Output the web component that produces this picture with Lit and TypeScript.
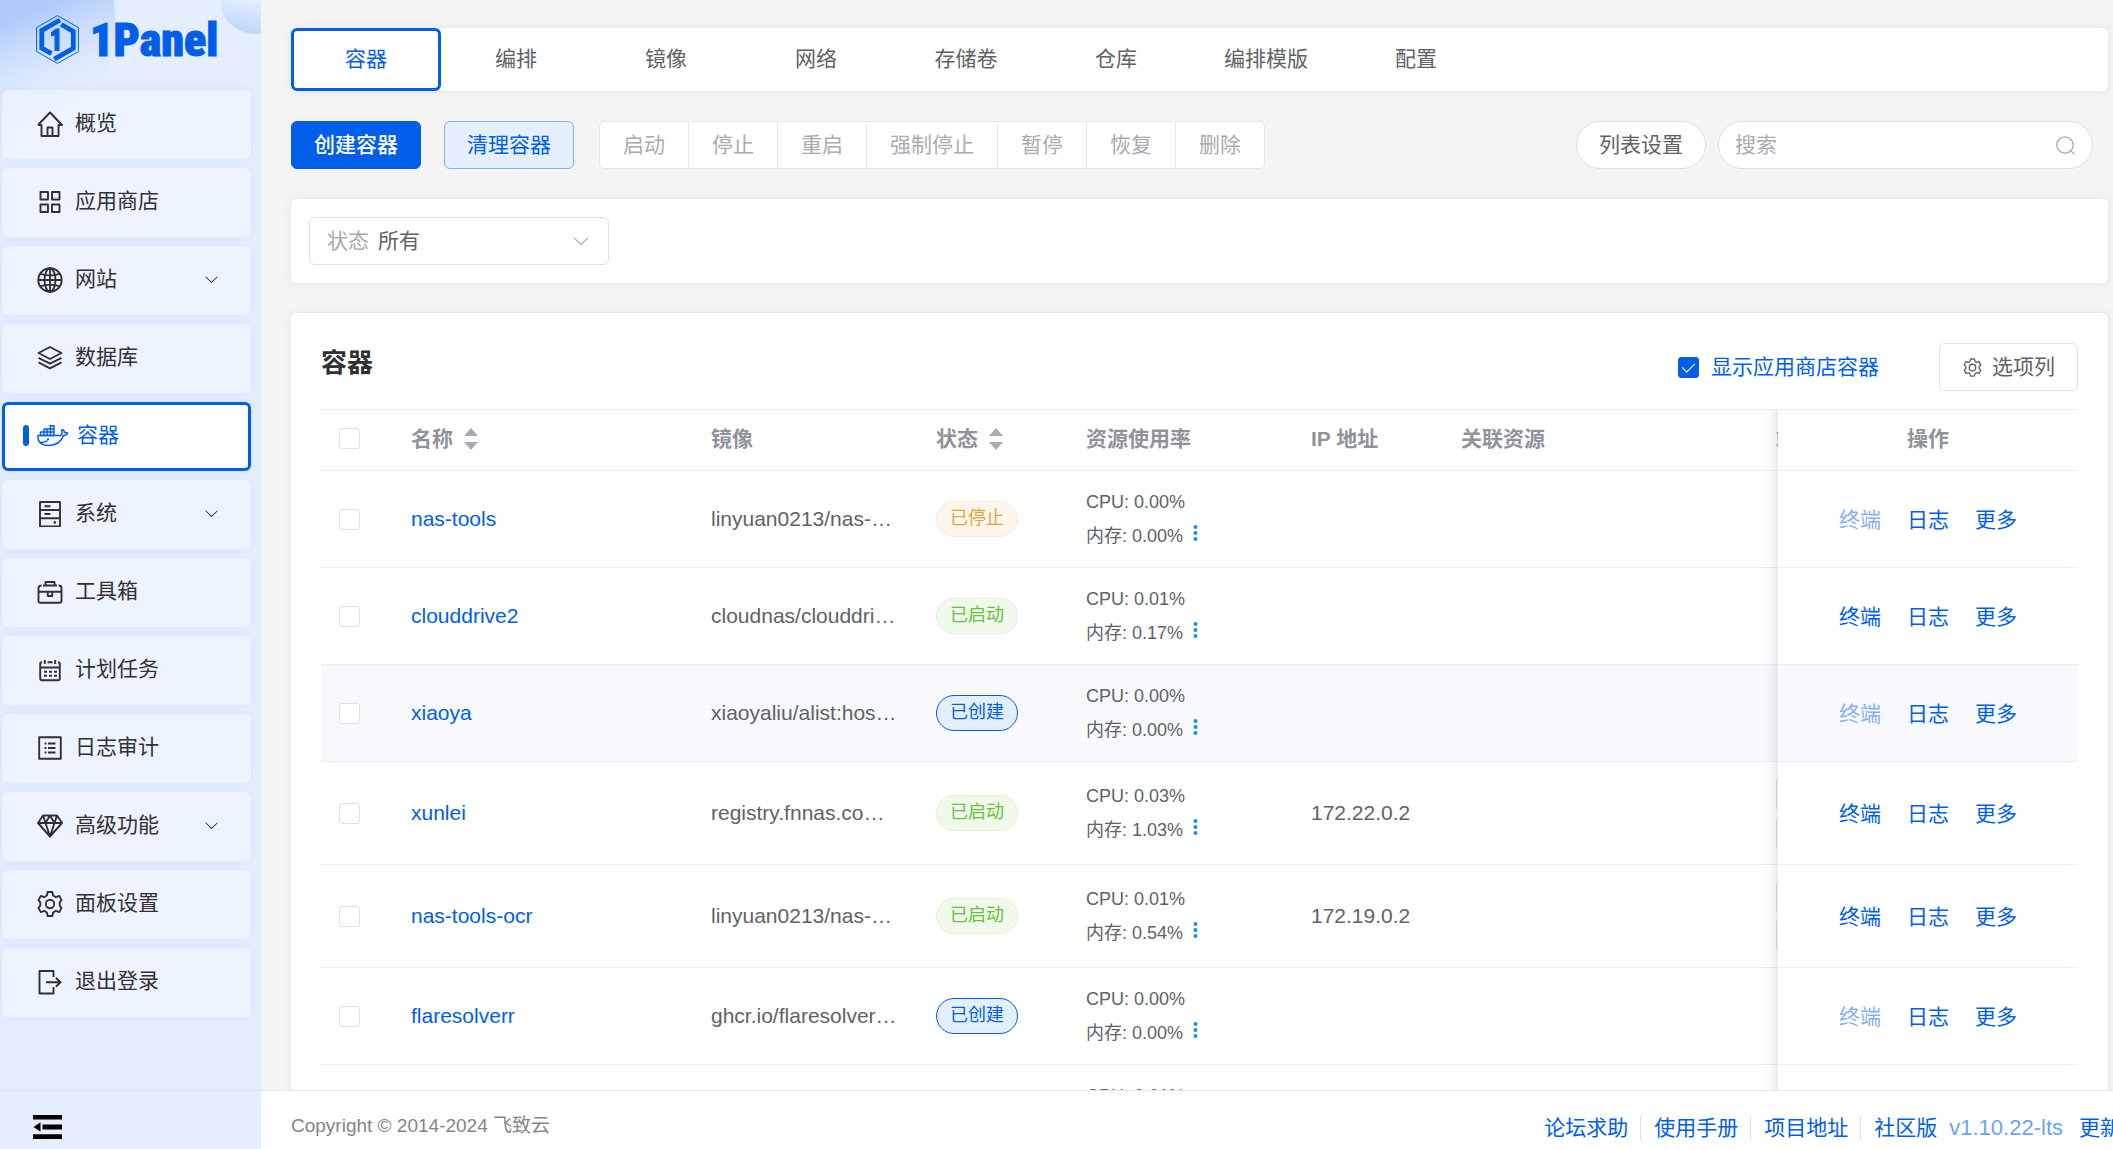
import { LitElement, html, css, svg, nothing, TemplateResult } from "lit";
import { customElement, property, state } from "lit/decorators.js";
import { classMap } from "lit/directives/class-map.js";

const GEAR =
  "M600.704 64a32 32 0 0 1 30.464 22.208l35.2 109.376c14.784 7.232 28.928 15.36 42.432 24.512l112.384-24.192a32 32 0 0 1 34.432 15.36L944.32 364.8a32 32 0 0 1-4.032 37.504l-77.12 85.12a357.12 357.12 0 0 1 0 49.024l77.12 85.248a32 32 0 0 1 4.032 37.504l-88.704 153.6a32 32 0 0 1-34.432 15.296L708.8 803.904c-13.44 9.088-27.648 17.28-42.368 24.512l-35.264 109.376A32 32 0 0 1 600.704 960H423.296a32 32 0 0 1-30.464-22.208L357.696 828.48a351.616 351.616 0 0 1-42.56-24.64l-112.32 24.256a32 32 0 0 1-34.432-15.36L79.68 659.2a32 32 0 0 1 4.032-37.504l77.12-85.248a357.12 357.12 0 0 1 0-48.896l-77.12-85.248A32 32 0 0 1 79.68 364.8l88.704-153.6a32 32 0 0 1 34.432-15.296l112.32 24.256c13.568-9.152 27.776-17.408 42.56-24.64l35.2-109.312A32 32 0 0 1 423.232 64H600.64zm-23.424 64H446.72l-36.352 113.088-24.512 11.968a294.113 294.113 0 0 0-34.816 20.096l-22.656 15.36-116.224-25.088-65.28 113.152 79.68 88.192-1.92 27.136a293.12 293.12 0 0 0 0 40.192l1.92 27.136-79.808 88.192 65.344 113.152 116.224-25.024 22.656 15.296a294.113 294.113 0 0 0 34.816 20.096l24.512 11.968L446.72 896h130.688l36.48-113.152 24.448-11.904a288.282 288.282 0 0 0 34.752-20.096l22.592-15.296 116.288 25.024 65.28-113.152-79.744-88.192 1.92-27.136a293.12 293.12 0 0 0 0-40.256l-1.92-27.136 79.808-88.128-65.344-113.152-116.288 24.96-22.592-15.232a287.616 287.616 0 0 0-34.752-20.096l-24.448-11.904L577.344 128zM512 320a192 192 0 1 1 0 384 192 192 0 0 1 0-384zm0 64a128 128 0 1 0 0 256 128 128 0 0 0 0-256z";

const CHEVRON =
  "M831.872 340.864 512 652.672 192.128 340.864a30.592 30.592 0 0 0-42.752 0 29.12 29.12 0 0 0 0 41.6L489.664 714.24a32 32 0 0 0 44.672 0l340.288-331.712a29.12 29.12 0 0 0 0-41.728 30.592 30.592 0 0 0-42.752 0z";

const ICONS: Record<string, TemplateResult> = {
  home: svg`<path d="M1 14 13 1.500l12 12.500H21.500M4.500 13.500V25h17V13.500M1 14h3.500M10.500 25v-8.500h5V25"/>`,
  apps: svg`<path d="M3.500 3h7.500v7.500H3.500zM15 3h7.500v7.500H15zM3.500 15.500H11V23H3.500zM15 15.500h7.500V23H15z"/>`,
  globe: svg`<circle cx="13" cy="13" r="11.700"/><ellipse cx="13" cy="13" rx="5.500" ry="11.700"/><path d="M13 1.300v23.400M1.300 13h23.400M3.500 6.800q9.500 3.200 19 0M3.500 19.200q9.500-3.200 19 0"/>`,
  layers: svg`<path d="m13 2 11.500 6L13 14 1.500 8zM1.500 12.800 13 18.600l11.500-5.800M1.500 17.400 13 23.400l11.500-6"/>`,
  docker: svg`<g stroke-width="1.500"><path d="M1 10.500h22.500c1.300-.400 1.800-1.300 1.500-2.500-.600-1.300-.500-2.400.300-3.500 1.500.700 2.200 1.900 2.200 3 1.200-.200 2.400 0 3.300.600-.900 1.700-2.400 2.400-4.300 2.500C24.300 17 18.800 20.500 11.500 20.500 4.500 20.500.300 17 1 10.500z"/><path d="M3.500 7h13.500v3.500H3.500zM7 4h10v3M12.500 .700H17V4M7 4v6.500M10 4v6.500M13.500 .700v9.800"/><path d="M3 17.300c3 .3 5.600-.3 7.500-1.600"/></g><circle cx="11" cy="14.300" r="1.100" fill="currentColor" stroke="none"/>`,
  server: svg`<path d="M3 1h20v24.500H3zM3 9h20M3 17.200h20M7.500 5.200h6M7.500 13h6"/><circle cx="17.800" cy="21.400" r="1.300" fill="currentColor" stroke="none"/>`,
  toolbox: svg`<path d="M1.500 12.800h23M8.500 6V3h9v4M4.500 6.500Q1.500 6.500 1.500 9v13q0 1.800 1.800 1.800h19.400q1.800 0 1.800-1.800V9q0-2.500-3-2.500M6 6.500h14M10.800 13v4h4.400v-4"/>`,
  calendar: svg`<path d="M5 5.200q-1.800 0-1.800 1.800v14.500q0 1.800 1.800 1.800h16q1.800 0 1.800-1.800V7q0-1.800-1.800-1.800M3.200 10.500h19.600M7.800 3v4M18.200 3v4M10.500 5.200h5"/><path stroke-dasharray="3 2" d="M7 14.700h13M7 18.700h13"/>`,
  list: svg`<path d="M2.200 2.200h21.600v21.600H2.200zM11 8.500h7.500M11 13h7.500M11 17.500h7.500M7.500 8.500h2M7.500 13h2M7.500 17.500h2"/>`,
  diamond: svg`<path d="M6 2.500h14l5 7.500-12 13.500L1 10zM1 10h24M6 2.500l2.500 7.500L13 23.500 17.500 10 20 2.500M8.500 10 13 2.500l4.500 7.500"/>`,
  cog: svg`<path d="M10.600 1h4.800l.7 3.500 2.800 1.700 3.300-1.300 2.300 4-1.800 2.600v3l1.800 2.600-2.300 4-3.300-1.300-2.800 1.700-.7 3.500h-4.800l-.7-3.500-2.800-1.700-3.300 1.300-2.300-4 1.800-2.600v-3L1.500 8.900l2.300-4 3.300 1.300 2.800-1.700z"/><circle cx="13" cy="13" r="4.200"/>`,
  logout: svg`<path d="M16.500 8V2H2.500v22.500h14V18M9 13.200h14.500M18.800 8.700l4.700 4.500-4.700 4.500"/>`,
};

interface MenuEntry {
  icon: string;
  label: string;
  expandable?: boolean;
}

const MENU: MenuEntry[] = [
  { icon: "home", label: "概览" },
  { icon: "apps", label: "应用商店" },
  { icon: "globe", label: "网站", expandable: true },
  { icon: "layers", label: "数据库" },
  { icon: "docker", label: "容器" },
  { icon: "server", label: "系统", expandable: true },
  { icon: "toolbox", label: "工具箱" },
  { icon: "calendar", label: "计划任务" },
  { icon: "list", label: "日志审计" },
  { icon: "diamond", label: "高级功能", expandable: true },
  { icon: "cog", label: "面板设置" },
  { icon: "logout", label: "退出登录" },
];

type Status = "stopped" | "running" | "created";

interface ContainerRow {
  cpu: string;
  name?: string;
  image?: string;
  status?: Status;
  memory?: string;
  ip?: string;
  ports?: number;
  hovered?: boolean;
}

const STATUS_LABEL: Record<Status, string> = {
  stopped: "已停止",
  running: "已启动",
  created: "已创建",
};

const ROWS: ContainerRow[] = [
  { name: "nas-tools", image: "linyuan0213/nas-…", status: "stopped", cpu: "0.00%", memory: "0.00%" },
  { name: "clouddrive2", image: "cloudnas/clouddri…", status: "running", cpu: "0.01%", memory: "0.17%" },
  { name: "xiaoya", image: "xiaoyaliu/alist:hos…", status: "created", cpu: "0.00%", memory: "0.00%", hovered: true },
  { name: "xunlei", image: "registry.fnnas.co…", status: "running", cpu: "0.03%", memory: "1.03%", ip: "172.22.0.2", ports: 2 },
  { name: "nas-tools-ocr", image: "linyuan0213/nas-…", status: "running", cpu: "0.01%", memory: "0.54%", ip: "172.19.0.2", ports: 2 },
  { name: "flaresolverr", image: "ghcr.io/flaresolver…", status: "created", cpu: "0.00%", memory: "0.00%" },
  { cpu: "0.01%" },
];

const base = css`
  * {
    box-sizing: border-box;
  }
  a {
    color: inherit;
    text-decoration: none;
  }
  button,
  input,
  select {
    font: inherit;
    margin: 0;
  }
  svg {
    display: block;
    flex: none;
  }
  .check {
    appearance: none;
    display: grid;
    place-items: center;
    flex: none;
    width: 21px;
    height: 21px;
    border: 1px solid #dcdfe6;
    border-radius: 3px;
    background: #fff;
  }
  .check:checked {
    border-color: #005eeb;
    background: #005eeb;
  }
  .check:checked::before {
    content: "";
    width: 6px;
    height: 11px;
    margin-bottom: 3px;
    border: solid #fff;
    border-width: 0 1px 1px 0;
    rotate: 45deg;
  }
`;

@customElement("side-bar")
export class SideBar extends LitElement {
  static styles = [
    base,
    css`
      :host {
        display: flex;
        flex-direction: column;
        position: relative;
        overflow: hidden;
        background: #e5eeff;
      }
      .backdrop {
        position: absolute;
        inset: 0 0 auto 0;
        width: 100%;
      }
      .brand {
        position: relative;
        display: flex;
        align-items: center;
        gap: 11px;
        height: 90px;
        padding: 0 0 11px 36px;
        color: #005eeb;
      }
      .name {
        font: 900 46px/50px "Liberation Sans Narrow", "Roboto Condensed", "Open Sans Condensed", Roboto, sans-serif;
        -webkit-text-stroke: 1px #005eeb;
      }
      nav {
        position: relative;
        display: flex;
        flex-direction: column;
        gap: 9px;
        padding: 0 10px 0 2px;
      }
      .item {
        display: flex;
        align-items: center;
        gap: 12px;
        height: 69px;
        padding: 0 31px 3px 35px;
        border-radius: 6px;
        background: rgba(255, 255, 255, 0.32);
        box-shadow: 0 0 9px rgba(0, 110, 210, 0.08);
        color: #303133;
      }
      .item span {
        flex: 1;
      }
      .item .icon {
        margin-top: 2px;
      }
      .active {
        gap: 9px;
        padding: 0 28px 3px 18px;
        border: 3px solid #005eeb;
        background: #fff;
        color: #005eeb;
      }
      .active::before {
        content: "";
        width: 6px;
        height: 21px;
        border-radius: 3px;
        background: #005eeb;
      }
      .active .icon {
        margin-left: -1px;
      }
    `,
  ];

  private renderItem(entry: MenuEntry) {
    const active = entry.icon === "docker";
    const width = active ? 31 : 26;
    const height = active ? 22 : 26;
    return html`<a class=${classMap({ item: true, active })} href="#" aria-current=${active ? "page" : "false"}>
      <svg class="icon" width=${width} height=${height} viewBox="0 0 ${width} ${height}" fill="none" stroke="currentColor" stroke-width="1.9" stroke-linejoin="round">
        ${ICONS[entry.icon]}
      </svg>
      <span>${entry.label}</span>
      ${entry.expandable
        ? html`<svg width="17" height="17" viewBox="0 0 1024 1024" fill="#303133"><path d=${CHEVRON} /></svg>`
        : nothing}
    </a>`;
  }

  render() {
    return html`
      <svg class="backdrop" viewBox="0 0 261 180" aria-hidden="true">
        <defs>
          <linearGradient id="big" gradientUnits="userSpaceOnUse" x1="0" y1="25" x2="40" y2="125">
            <stop offset="0" stop-color="#aecbf9" />
            <stop offset="1" stop-color="#e5eeff" stop-opacity="0" />
          </linearGradient>
          <linearGradient id="small" gradientUnits="userSpaceOnUse" x1="261" y1="0" x2="255" y2="34">
            <stop offset="0" stop-color="#e5effe" />
            <stop offset="1" stop-color="#bfd6fa" />
          </linearGradient>
        </defs>
        <circle cx="-65" cy="20" r="180" fill="url(#big)" />
        <circle cx="255" cy="-1" r="35" fill="url(#small)" />
      </svg>
      <div class="brand">
        <svg width="43" height="49" viewBox="0 0 43 49" fill="none">
          <path stroke="currentColor" stroke-width="1" d="M21.500 .600 42.400 12.500v24L21.500 48.400.600 36.500v-24z" />
          <path stroke="currentColor" stroke-width="4.800" d="M24 5 5.800 15.300V33l9.700 5.600M25.300 9.500l12 6.800v17L18.300 44.200" />
          <path fill="currentColor" d="M23.500 13.500V36h-5V20.500L15 21.500v-4.300l5-3.700z" />
        </svg>
        <span class="name">1Panel</span>
      </div>
      <nav aria-label="主菜单">${MENU.map((entry) => this.renderItem(entry))}</nav>
    `;
  }
}

@customElement("container-table")
export class ContainerTable extends LitElement {
  @property({ attribute: false }) rows: ContainerRow[] = [];

  static styles = [
    base,
    css`
      :host {
        display: block;
        overflow: hidden;
        border-top: 1px solid #ebeef5;
      }
      table {
        width: calc(100% + 280px);
        table-layout: fixed;
        border-collapse: separate;
        border-spacing: 0;
      }
      th,
      td {
        padding: 0 18px;
        border-bottom: 1px solid #ebeef5;
        background: #fff;
        text-align: left;
        white-space: nowrap;
      }
      th {
        height: 61px;
        padding-bottom: 3px;
        color: #909399;
        font-weight: bold;
      }
      td {
        height: 97px;
        color: #606266;
      }
      .tall td {
        height: 103px;
      }
      .hovered td {
        background: #f7f9fc;
      }
      .w-check {
        width: 72px;
      }
      .w-name,
      .w-ports,
      .w-ops {
        width: 300px;
      }
      .w-image,
      .w-usage {
        width: 225px;
      }
      .w-status,
      .w-ip {
        width: 150px;
      }
      .sortable {
        display: flex;
        align-items: center;
        gap: 11px;
      }
      .name {
        color: #005eeb;
      }
      .tag {
        display: inline-block;
        height: 36px;
        padding: 0 13px;
        border: 1px solid;
        border-radius: 18px;
        font-size: 18px;
        line-height: 33px;
        vertical-align: middle;
      }
      .stopped {
        border-color: #faecd8;
        background: #fdf6ec;
        color: #e6a23c;
      }
      .running {
        border-color: #e1f3d8;
        background: #f0f9eb;
        color: #67c23a;
      }
      .created {
        border-color: #005eeb;
        background: #e5eefd;
        color: #005eeb;
      }
      .usage {
        font-size: 18px;
        line-height: 34px;
      }
      .blank {
        height: 34px;
      }
      .memory {
        display: flex;
        gap: 10px;
      }
      .more {
        padding: 0;
        border: 0;
        background: none;
        color: #1296db;
      }
      .more svg {
        margin-bottom: 6px;
      }
      .port {
        display: block;
        width: 200px;
        height: 35px;
        border: 1px solid #dcdfe6;
        border-radius: 5px;
        background: #fff;
      }
      .port + .port {
        margin-top: 4px;
      }
      .fixed {
        position: sticky;
        right: 0;
        text-align: center;
      }
      .fixed::before {
        content: "";
        position: absolute;
        inset: 0 auto -1px -15px;
        width: 15px;
        box-shadow: inset -15px 0 15px -15px rgba(0, 0, 0, 0.16);
      }
      .ops {
        display: flex;
        justify-content: center;
        gap: 26px;
        padding-top: 2px;
      }
      .op {
        padding: 0;
        border: 0;
        background: none;
        color: #005eeb;
      }
      .op:disabled {
        color: #85b0f8;
      }
    `,
  ];

  private renderSort() {
    return html`<svg width="14" height="24" viewBox="0 0 14 24" fill="#a8abb2" aria-hidden="true">
      <path d="M7 1l7 8H0zM7 23l7-8H0z" />
    </svg>`;
  }

  private renderMemory(memory?: string) {
    if (!memory) return html`<div class="blank"></div>`;
    return html`<div class="usage memory">
      内存: ${memory}
      <button class="more" aria-label="资源详情">
        <svg width="5" height="16" viewBox="0 0 5 16" fill="currentColor">
          <circle cx="2.500" cy="2" r="2" /><circle cx="2.500" cy="8" r="2" /><circle cx="2.500" cy="14" r="2" />
        </svg>
      </button>
    </div>`;
  }

  private renderRow(row: ContainerRow) {
    return html`<tr class=${classMap({ tall: !!row.ports, hovered: !!row.hovered })}>
      <td>${row.name ? html`<input class="check" type="checkbox" aria-label="选择 ${row.name}" />` : nothing}</td>
      <td>${row.name ? html`<a class="name" href="#">${row.name}</a>` : nothing}</td>
      <td>${row.image ?? nothing}</td>
      <td>${row.status ? html`<span class="tag ${row.status}">${STATUS_LABEL[row.status]}</span>` : nothing}</td>
      <td>
        <div class="usage">CPU: ${row.cpu}</div>
        ${this.renderMemory(row.memory)}
      </td>
      <td>${row.ip ?? nothing}</td>
      <td></td>
      <td>${Array.from({ length: row.ports ?? 0 }, () => html`<button class="port" aria-label="端口"></button>`)}</td>
      <td class="fixed">
        ${row.status
          ? html`<div class="ops">
              <button class="op" ?disabled=${row.status !== "running"}>终端</button>
              <button class="op">日志</button>
              <button class="op">更多</button>
            </div>`
          : nothing}
      </td>
    </tr>`;
  }

  render() {
    return html`<table>
      <thead>
        <tr>
          <th class="w-check"><input class="check" type="checkbox" aria-label="全选" /></th>
          <th class="w-name"><div class="sortable">名称 ${this.renderSort()}</div></th>
          <th class="w-image">镜像</th>
          <th class="w-status"><div class="sortable">状态 ${this.renderSort()}</div></th>
          <th class="w-usage">资源使用率</th>
          <th class="w-ip">IP 地址</th>
          <th>关联资源</th>
          <th class="w-ports">端口</th>
          <th class="w-ops fixed">操作</th>
        </tr>
      </thead>
      <tbody>
        ${this.rows.map((row) => this.renderRow(row))}
      </tbody>
    </table>`;
  }
}

@customElement("app-root")
export class AppRoot extends LitElement {
  @state() private tab = "容器";

  static styles = [
    base,
    css`
      :host {
        display: grid;
        grid-template: minmax(0, 1fr) 59px / 261px minmax(0, 1fr);
        height: 100vh;
        overflow: hidden;
        background: #f4f4f4;
        color: #606266;
        font: 21px/30px "Liberation Sans", "Noto Sans CJK SC", sans-serif;
      }
      main {
        display: flex;
        flex-direction: column;
        gap: 30px;
        overflow: hidden;
        padding: 28px 5px 0 30px;
      }
      .card {
        flex: none;
        border-radius: 6px;
        background: #fff;
        box-shadow: 0 0 9px rgba(0, 94, 235, 0.1);
      }
      .tabs {
        display: flex;
      }
      .tab {
        width: 150px;
        height: 63px;
        padding: 0 0 1px;
        border: 3px solid transparent;
        border-radius: 6px;
        background: none;
        color: #606266;
      }
      .tab.selected {
        border-color: #005eeb;
        background: #fff;
        color: #005eeb;
      }
      .toolbar {
        display: flex;
        flex: none;
        align-items: center;
        gap: 23px;
        padding-right: 15px;
      }
      .btn {
        height: 48px;
        padding: 0 22px;
        border: 1px solid #dcdfe6;
        border-radius: 6px;
        background: #fff;
        color: #606266;
        white-space: nowrap;
      }
      .primary {
        border-color: #005eeb;
        background: #005eeb;
        color: #fff;
        font-weight: 500;
      }
      .plain {
        border-color: #80aff5;
        background: #e5effd;
        color: #005eeb;
      }
      .group {
        display: flex;
        margin-left: 2px;
      }
      .group .btn {
        padding: 0 23px;
        border-color: #e4e7ed;
        border-radius: 0;
        color: #a8abb2;
      }
      .group .btn + .btn {
        margin-left: -1px;
      }
      .group .btn:first-child {
        border-radius: 6px 0 0 6px;
      }
      .group .btn:last-child {
        border-radius: 0 6px 6px 0;
      }
      .right {
        display: flex;
        gap: 12px;
        margin-left: auto;
      }
      .right .btn {
        border-radius: 24px;
      }
      .search {
        display: flex;
        align-items: center;
        width: 375px;
        height: 48px;
        padding: 0 17px 0 16px;
        border: 1px solid #dcdfe6;
        border-radius: 24px;
        background: #fff;
        color: #a8abb2;
      }
      .search input {
        flex: 1;
        min-width: 0;
        padding: 0;
        border: 0;
        outline: 0;
        background: none;
      }
      .search input::placeholder {
        color: #a8abb2;
      }
      .filter {
        padding: 18px;
      }
      .select {
        display: flex;
        align-items: center;
        gap: 9px;
        width: 300px;
        height: 48px;
        padding: 0 17px 1px;
        border: 1px solid #dcdfe6;
        border-radius: 6px;
        color: #a8abb2;
      }
      .select select {
        flex: 1;
        appearance: none;
        padding: 0;
        border: 0;
        outline: 0;
        background: none;
        color: #606266;
      }
      .panel {
        padding: 30px;
      }
      .head {
        display: flex;
        align-items: center;
        height: 66px;
        padding-bottom: 18px;
      }
      h2 {
        flex: 1;
        margin: 0;
        padding-bottom: 9px;
        color: #303133;
        font-size: 26px;
        line-height: 36px;
      }
      .toggle {
        display: flex;
        align-items: center;
        gap: 12px;
        margin-right: 60px;
        color: #005eeb;
      }
      .columns {
        display: flex;
        align-items: center;
        gap: 9px;
      }
      .corner {
        padding: 24px 33px;
        border-top: 1px solid #dde3f0;
        background: #e5eeff;
      }
      .collapse {
        display: block;
        padding: 0;
        border: 0;
        background: none;
        color: #000;
      }
      footer {
        display: flex;
        align-items: center;
        justify-content: space-between;
        overflow: hidden;
        padding-left: 30px;
        border-top: 1px solid #e4e7ed;
        background: #fff;
        white-space: nowrap;
      }
      .copyright {
        padding-top: 12px;
        color: #858585;
        font-size: 19px;
      }
      .links {
        display: flex;
        align-items: center;
        margin-right: -8px;
        padding-top: 16px;
        color: #005eeb;
      }
      .links .sep {
        margin-right: 13px;
        padding-right: 12px;
        border-right: 1px solid #dcdfe6;
        line-height: 24px;
      }
      .version {
        margin: 0 16px 0 12px;
        color: #6ea2f5;
        font-size: 22px;
      }
    `,
  ];

  private tabs = ["容器", "编排", "镜像", "网络", "存储卷", "仓库", "编排模版", "配置"];
  private actions = ["启动", "停止", "重启", "强制停止", "暂停", "恢复", "删除"];

  render() {
    return html`
      <side-bar></side-bar>
      <main>
        <div class="card tabs">
          ${this.tabs.map(
            (label) => html`<button class=${classMap({ tab: true, selected: label === this.tab })} @click=${() => (this.tab = label)}>${label}</button>`
          )}
        </div>
        <div class="toolbar">
          <button class="btn primary">创建容器</button>
          <button class="btn plain">清理容器</button>
          <div class="group">${this.actions.map((label) => html`<button class="btn" disabled>${label}</button>`)}</div>
          <div class="right">
            <button class="btn">列表设置</button>
            <div class="search">
              <input type="text" placeholder="搜索" aria-label="搜索" />
              <svg width="19" height="19" viewBox="0 0 19 19" fill="none" stroke="currentColor" stroke-width="1.3">
                <circle cx="9" cy="9" r="8.200" />
                <path d="m15 15 3.300 3.300" />
              </svg>
            </div>
          </div>
        </div>
        <div class="card filter">
          <div class="select">
            <label for="status">状态</label>
            <select id="status">
              <option>所有</option>
            </select>
            <svg width="20" height="20" viewBox="0 0 1024 1024" fill="currentColor"><path d=${CHEVRON} /></svg>
          </div>
        </div>
        <section class="card panel">
          <div class="head">
            <h2>容器</h2>
            <label class="toggle"><input class="check" type="checkbox" checked />显示应用商店容器</label>
            <button class="btn columns">
              <svg width="21" height="21" viewBox="0 0 1024 1024" fill="currentColor"><path d=${GEAR} /></svg>
              选项列
            </button>
          </div>
          <container-table .rows=${ROWS}></container-table>
        </section>
      </main>
      <div class="corner">
        <button class="collapse" aria-label="收起菜单">
          <svg width="29" height="24" viewBox="0 0 29 24" fill="currentColor">
            <path d="M0 0h29v4.500H0zM9.500 9.500H29v5H9.500zM0 19.300h29V24H0zM.500 12l7-4.800v9.600z" />
          </svg>
        </button>
      </div>
      <footer>
        <span class="copyright">Copyright © 2014-2024 飞致云</span>
        <div class="links">
          <a class="sep" href="#">论坛求助</a>
          <a class="sep" href="#">使用手册</a>
          <a class="sep" href="#">项目地址</a>
          <a href="#">社区版</a>
          <span class="version">v1.10.22-lts</span>
          <a href="#">更新</a>
        </div>
      </footer>
    `;
  }
}
